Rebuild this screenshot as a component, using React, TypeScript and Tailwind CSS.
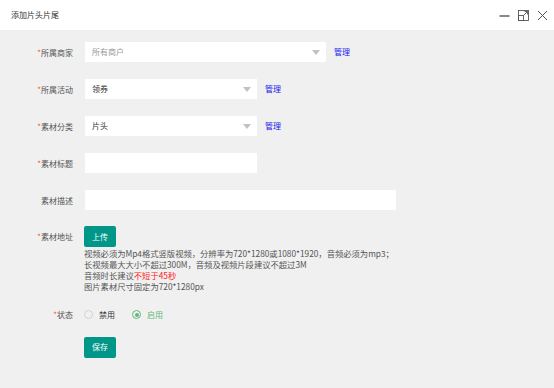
import { useState } from "react";

const font = { fontFamily: '"Noto Sans CJK SC", "Noto Sans", sans-serif' };

function Caret() {
  return (
    <span className="h-0 w-0 border-x-[4px] border-t-[5px] border-x-transparent border-t-[#c2c2c2]" />
  );
}

function Label({ text, required = true }: { text: string; required?: boolean }) {
  return (
    <div className="mr-[12px] w-[73px] shrink-0 text-right text-[8px] leading-[11px] text-[#555]">
      {required && <span className="text-[#ff5722]">*</span>}
      {text}
    </div>
  );
}

function SelectBox({ value, width, placeholder = false }: { value: string; width: string; placeholder?: boolean }) {
  return (
    <div className={`flex h-[20px] ${width} items-center justify-between bg-white pl-[7px] pr-[6px]`}>
      <span className={`text-[8px] ${placeholder ? "text-[#999]" : "text-[#333]"}`}>{value}</span>
      <Caret />
    </div>
  );
}

export default function App() {
  const [enabled, setEnabled] = useState(true);

  return (
    <div className="flex h-[388px] w-[554px] flex-col bg-[#f0f0f0]" style={font}>
      <div className="flex h-[30px] shrink-0 items-center justify-between bg-white pl-[11px] pr-[6px]">
        <span className="text-[8px] text-[#333]">添加片头片尾</span>
        <div className="flex items-center gap-[8px] text-[#555]">
          <svg width="11" height="11" viewBox="0 0 11 11">
            <path d="M0.5 6h10" stroke="currentColor" strokeWidth="1.4" />
          </svg>
          <svg width="11" height="11" viewBox="0 0 11 11" fill="none" stroke="currentColor" strokeWidth="0.9">
            <rect x="0.5" y="0.5" width="10" height="10" />
            <rect x="0.5" y="5.5" width="5" height="5" />
            <path d="M5.5 5.5L9.5 1.5M6.5 1.5h3v3" />
          </svg>
          <svg width="11" height="11" viewBox="0 0 11 11" fill="none" stroke="currentColor" strokeWidth="1">
            <path d="M1 1l9 9M10 1l-9 9" />
          </svg>
        </div>
      </div>

      <div className="flex flex-col pt-[12px]">
        <div className="flex items-center">
          <Label text="所属商家" />
          <SelectBox value="所有商户" width="w-[241px]" placeholder />
          <span className="ml-[8px] text-[8px] text-[#2222ee]">管理</span>
        </div>

        <div className="mt-[17px] flex items-center">
          <Label text="所属活动" />
          <SelectBox value="领券" width="w-[172px]" />
          <span className="ml-[8px] text-[8px] text-[#2222ee]">管理</span>
        </div>

        <div className="mt-[17px] flex items-center">
          <Label text="素材分类" />
          <SelectBox value="片头" width="w-[172px]" />
          <span className="ml-[8px] text-[8px] text-[#2222ee]">管理</span>
        </div>

        <div className="mt-[17px] flex items-center">
          <Label text="素材标题" />
          <div className="h-[20px] w-[172px] bg-white" />
        </div>

        <div className="mt-[17px] flex items-center">
          <Label text="素材描述" required={false} />
          <div className="h-[20px] w-[311px] bg-white" />
        </div>

        <div className="mt-[16px] flex items-start">
          <div className="mt-[5px]">
            <Label text="素材地址" />
          </div>
          <div className="-ml-[1px] flex flex-col">
            <button className="h-[21px] w-[32px] rounded-[2px] bg-[#009688] text-[8px] text-white">上传</button>
            <div className="mt-[1px] text-[8.3px] leading-[11px] text-[#555]">
              <p>视频必须为Mp4格式竖版视频，分辨率为720*1280或1080*1920，音频必须为mp3；</p>
              <p>长视频最大大小不超过300M，音频及视频片段建议不超过3M</p>
              <p>
                音频时长建议<span className="text-[#ff2020]">不短于45秒</span>
              </p>
              <p>图片素材尺寸固定为720*1280px</p>
            </div>
          </div>
        </div>

        <div className="mt-[17px] flex h-[11px] items-center">
          <Label text="状态" />
          <div className="-ml-[1px] flex items-center text-[8px] leading-[11px]">
            <button className="flex items-center gap-[6px]" onClick={() => setEnabled(false)}>
              <span className="flex h-[9px] w-[9px] items-center justify-center rounded-full border border-[#d2d2d2]">
                {!enabled && <span className="h-[4px] w-[4px] rounded-full bg-[#5fb878]" />}
              </span>
              <span className={enabled ? "text-[#333]" : "text-[#5fb878]"}>禁用</span>
            </button>
            <button className="ml-[17px] flex items-center gap-[6px]" onClick={() => setEnabled(true)}>
              <span
                className={`flex h-[9px] w-[9px] items-center justify-center rounded-full border ${
                  enabled ? "border-[#5fb878]" : "border-[#d2d2d2]"
                }`}
              >
                {enabled && <span className="h-[4px] w-[4px] rounded-full bg-[#5fb878]" />}
              </span>
              <span className={enabled ? "text-[#5fb878]" : "text-[#333]"}>启用</span>
            </button>
          </div>
        </div>

        <div className="mt-[11px] pl-[84px]">
          <button className="h-[21px] w-[32px] rounded-[2px] bg-[#009688] text-[8px] text-white">保存</button>
        </div>
      </div>
    </div>
  );
}
